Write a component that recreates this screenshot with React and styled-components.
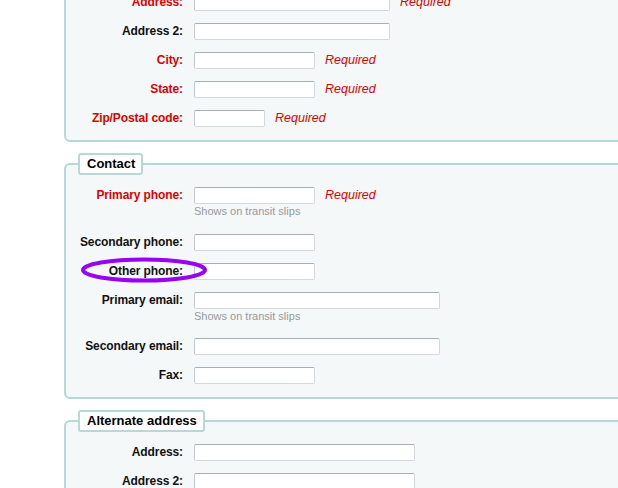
import React from "react";
import styled, { createGlobalStyle } from "styled-components";

const BORDER = "#b7d7d8";
const RED = "#dd0000";

const mainAddress = [
  { label: "Address:", size: "long", required: true },
  { label: "Address 2:", size: "long" },
  { label: "City:", size: "medium", required: true },
  { label: "State:", size: "medium", required: true },
  { label: "Zip/Postal code:", size: "short", required: true },
];

const contact = [
  { label: "Primary phone:", size: "medium", required: true, hint: "Shows on transit slips" },
  { label: "Secondary phone:", size: "medium" },
  { label: "Other phone:", size: "medium", marked: true },
  { label: "Primary email:", size: "email", hint: "Shows on transit slips" },
  { label: "Secondary email:", size: "email" },
  { label: "Fax:", size: "medium" },
];

const altAddress = [
  { label: "Address:", size: "alt" },
  { label: "Address 2:", size: "alt" },
];

const widths = { long: 196, medium: 121, short: 71, email: 246, alt: 221 };

const Field = ({ field }) => (
  <Row>
    {field.marked && (
      <Mark width="130" height="28" viewBox="0 0 130 28">
        <ellipse cx="65" cy="14" rx="61" ry="10.5" fill="none" stroke="#9a00f2" strokeWidth="4" />
      </Mark>
    )}
    <Label $required={field.required}>{field.label}</Label>
    <Control>
      <InputLine>
        <Input type="text" $w={widths[field.size]} />
        {field.required && <Required>Required</Required>}
      </InputLine>
      {field.hint && <Hint>{field.hint}</Hint>}
    </Control>
  </Row>
);

const Section = ({ title, fields }) => (
  <Fieldset>
    <Legend>{title}</Legend>
    <List>
      {fields.map((f) => (
        <Field key={f.label} field={f} />
      ))}
    </List>
  </Fieldset>
);

const App = () => (
  <>
    <GlobalStyle />
    <Page>
      <Section title="Main address" fields={mainAddress} />
      <Section title="Contact" fields={contact} />
      <Section title="Alternate address" fields={altAddress} />
    </Page>
  </>
);

const GlobalStyle = createGlobalStyle`
  html, body {
    margin: 0;
    background: #ffffff;
    overflow: hidden;
  }
  body {
    font-family: "Liberation Sans", Arial, sans-serif;
  }
`;

const Page = styled.div`
  display: flex;
  flex-direction: column;
  gap: 11px;
  margin-top: -40px;
  padding-left: 64px;
  width: 700px;
`;

const Fieldset = styled.fieldset`
  margin: 0;
  padding: 12px 12px 13px 12px;
  border: 2px solid ${BORDER};
  border-radius: 6px;
  background: #f4f8f9;
  min-width: 0;
`;

const Legend = styled.legend`
  margin: 0;
  padding: 0 6px 0 7px;
  background: #ffffff;
  border: 2px solid ${BORDER};
  border-radius: 3px;
  font-size: 13px;
  font-weight: bold;
  line-height: 18px;
  color: #000;
`;

const List = styled.div`
  display: flex;
  flex-direction: column;
  gap: 12px;
`;

const Row = styled.div`
  position: relative;
  display: grid;
  grid-template-columns: 105px 1fr;
  column-gap: 11px;
  align-items: start;
`;

const Mark = styled.svg`
  position: absolute;
  left: 1px;
  top: -7px;
  pointer-events: none;
`;

const Label = styled.label`
  text-align: right;
  font-size: 12px;
  font-weight: bold;
  line-height: 17px;
  letter-spacing: -0.1px;
  color: ${(p) => (p.$required ? RED : "#111")};
  white-space: nowrap;
`;

const Control = styled.div`
  display: flex;
  flex-direction: column;
`;

const InputLine = styled.div`
  display: flex;
  align-items: center;
  gap: 10px;
`;

const Input = styled.input`
  box-sizing: border-box;
  width: ${(p) => p.$w}px;
  height: 17px;
  margin: 0;
  padding: 0 2px;
  background: #fff;
  border: 1px solid #d3d8dc;
  border-top-color: #a9aeb3;
  border-left-color: #c4c9cd;
  border-radius: 2px;
  font: 12px "Liberation Sans", Arial, sans-serif;
`;

const Required = styled.span`
  font-size: 12.5px;
  font-style: italic;
  line-height: 17px;
  color: ${RED};
`;

const Hint = styled.div`
  font-size: 11px;
  line-height: 15px;
  padding-bottom: 2.5px;
  color: #999;
`;

export default App;
